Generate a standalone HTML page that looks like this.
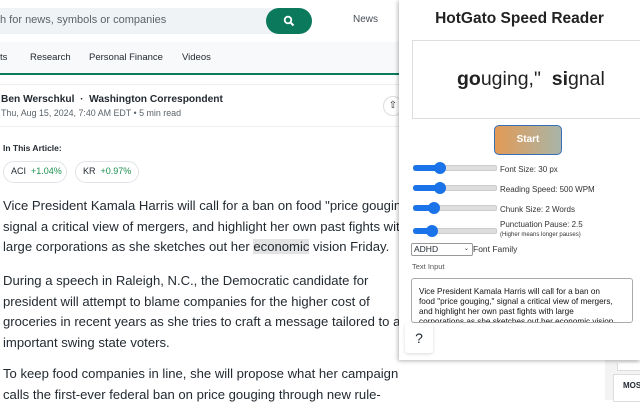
<!DOCTYPE html><html><head><style>
body{margin:0;width:640px;height:400px;overflow:hidden;background:#fff;font-family:"Liberation Sans",sans-serif;position:relative;color:#232a31}
.a{position:absolute;white-space:nowrap}
p.t{position:absolute;left:3px;margin:0;font-size:13.1px;line-height:20.5px;color:#232a31;white-space:nowrap}
.panel{position:absolute;left:399px;top:0;width:241px;height:360px;background:#fff;box-shadow:-1px 1px 4px rgba(0,0,0,.3)}
.sl{position:absolute;left:14px;width:82px;height:4px;background:#ddd;border-radius:2px;border:1px solid #ccc}
.sl i{position:absolute;left:-1px;top:-1px;height:6px;background:#1a73e8;border-radius:3px}
.sl b{position:absolute;top:-4px;width:12px;height:12px;border-radius:50%;background:#1a73e8}
.lb{position:absolute;left:101px;font-size:8px;color:#333}
</style></head><body>
<div class="a" style="left:0;top:8px;width:300px;height:26px;background:#f0f3f5;border-radius:0 13px 13px 0"></div>
<div class="a" style="left:0;top:14px;font-size:11px;color:#5b636a">h for news, symbols or companies</div>
<div class="a" style="left:266px;top:8px;width:46px;height:26px;background:#0b7a5c;border-radius:13px"></div>
<svg class="a" style="left:283px;top:15px" width="12" height="12" viewBox="0 0 12 12"><circle cx="5" cy="5" r="3.3" fill="none" stroke="#fff" stroke-width="1.8"/><path d="M7.5 7.5L10.5 10.5" stroke="#fff" stroke-width="2"/></svg>
<div class="a" style="left:353px;top:14px;font-size:10px;color:#464e56">News</div>
<div class="a" style="left:0;top:42px;width:400px;height:32px;background:#f8f9fa"></div>
<div class="a" style="left:0;top:52px;font-size:9.5px;color:#232a31">ts</div>
<div class="a" style="left:30px;top:52px;font-size:9.5px">Research</div>
<div class="a" style="left:89px;top:52px;font-size:9.5px">Personal Finance</div>
<div class="a" style="left:182px;top:52px;font-size:9.5px">Videos</div>
<div class="a" style="left:0;top:73px;width:400px;height:2px;background:#0b7a5c"></div>
<div class="a" style="left:0;top:84px;width:400px;height:1px;background:#eee"></div>
<div class="a" style="left:1px;top:94px;font-size:10.2px;font-weight:bold">Ben Werschkul &nbsp;·&nbsp; Washington Correspondent</div>
<div class="a" style="left:1px;top:108px;font-size:8.9px;color:#5b636a">Thu, Aug 15, 2024, 7:40 AM EDT • 5 min read</div>
<div class="a" style="left:383px;top:96px;width:18px;height:18px;border:1px solid #ddd;border-radius:50%;font-size:10px;text-align:center;line-height:18px">⇧</div>
<div class="a" style="left:0;top:126px;width:400px;height:1px;background:#eee"></div>
<div class="a" style="left:3px;top:143px;font-size:8.5px;font-weight:bold">In This Article:</div>
<div class="a" style="left:3px;top:161px;width:62px;height:20px;border:1px solid #e0e4e9;border-radius:11px"></div>
<div class="a" style="left:11px;top:166px;font-size:9px">ACI <span style="color:#1b8f4d">&nbsp;+1.04%</span></div>
<div class="a" style="left:75px;top:161px;width:62px;height:20px;border:1px solid #e0e4e9;border-radius:11px"></div>
<div class="a" style="left:83px;top:166px;font-size:9px">KR <span style="color:#1b8f4d">&nbsp;+0.97%</span></div>
<p class="t" style="top:196px">Vice President Kamala Harris will call for a ban on food "price gouging,"<br>signal a critical view of mergers, and highlight her own past fights with<br>large corporations as she sketches out her <span style="background:#e3e3e3">economic</span> vision Friday.</p>
<p class="t" style="top:271px">During a speech in Raleigh, N.C., the Democratic candidate for<br>president will attempt to blame companies for the higher cost of<br>groceries in recent years as she tries to craft a message tailored to a<br>important swing state voters.</p>
<p class="t" style="top:364px">To keep food companies in line, she will propose what her campaign<br>calls the first-ever federal ban on price gouging through new rule-</p>
<div class="a" style="left:605px;top:360px;width:35px;height:40px;background:#f3f3f3"></div>
<div class="a" style="left:617px;top:363px;width:23px;height:7px;border:1px solid #ddd;border-top:0;background:#fff"></div>
<div class="a" style="left:613px;top:374px;width:27px;height:26px;background:#fff;border:1px solid #ddd"></div>
<div class="a" style="left:623px;top:381px;font-size:8px;font-weight:bold">MOS</div>
<div class="panel">
<div class="a" style="left:0;width:241px;top:10px;text-align:center;font-size:15.5px;font-weight:bold;color:#222">HotGato Speed Reader</div>
<div class="a" style="left:13px;top:40px;width:230px;height:77px;border:1px solid #ddd;background:#fff"></div>
<div class="a" style="left:58px;top:68px;font-size:19.5px;color:#222"><b>go</b>uging," &nbsp;<b>si</b>gnal</div>
<div class="a" style="left:95px;top:125px;width:66px;height:28px;border:1.5px solid #3a6fb5;border-radius:5px;background:linear-gradient(90deg,#e39a55,#a8b5a8);color:#fff;font-weight:bold;font-size:10px;text-align:center;line-height:28px">Start</div>
<div class="sl" style="top:165px"><i style="width:28px"></i><b style="left:20px"></b></div><div class="lb" style="top:165px">Font Size: 30 px</div>
<div class="sl" style="top:185px"><i style="width:28px"></i><b style="left:20px"></b></div><div class="lb" style="top:185px">Reading Speed: 500 WPM</div>
<div class="sl" style="top:205px"><i style="width:22px"></i><b style="left:14px"></b></div><div class="lb" style="top:205px">Chunk Size: 2 Words</div>
<div class="sl" style="top:228px"><i style="width:20px"></i><b style="left:12px"></b></div><div class="lb" style="top:220px">Punctuation Pause: 2.5<br><span style="font-size:6px">(Higher means longer pauses)</span></div>
<div class="a" style="left:12px;top:243px;width:58px;height:11px;border:1px solid #999;border-radius:2px;font-size:8.5px;line-height:11px;padding-left:2px">ADHD<span style="position:absolute;right:3px;font-size:6px">⌄</span></div>
<div class="lb" style="left:74px;top:244px;font-size:8.5px">Font Family</div>
<div class="lb" style="left:13px;top:262px;font-size:7.5px;color:#555">Text Input</div>
<div class="a" style="left:12px;top:278px;width:222px;height:45px;border:1px solid #aaa;border-radius:3px;overflow:hidden;font-size:8.2px;line-height:10px;padding:8px 0 0 7px;box-sizing:border-box;color:#111">Vice President Kamala Harris will call for a ban on<br>food "price gouging," signal a critical view of mergers,<br>and highlight her own past fights with large<br>corporations as she sketches out her economic vision</div>
<div class="a" style="left:6px;top:323px;width:28px;height:30px;background:#fff;box-shadow:0 1px 3px rgba(0,0,0,.15);border-radius:3px;font-size:14px;text-align:center;line-height:30px">?</div>
</div>
</body></html>
